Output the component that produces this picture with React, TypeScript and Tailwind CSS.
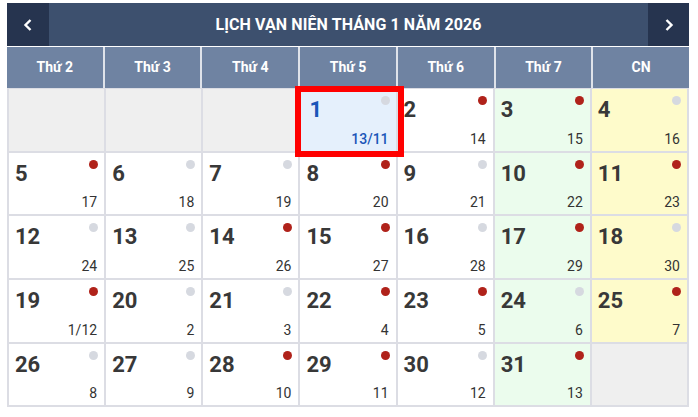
import React from 'react';

interface Ngay {
  duong: number;
  am: string;
  dot: 'red' | 'gray';
}

const THU = ['Thứ 2', 'Thứ 3', 'Thứ 4', 'Thứ 5', 'Thứ 6', 'Thứ 7', 'CN'];

const DOTS: Record<number, 'red' | 'gray'> = {
  1: 'gray', 2: 'red', 3: 'red', 4: 'gray',
  5: 'red', 6: 'gray', 7: 'gray', 8: 'red', 9: 'gray', 10: 'red', 11: 'red',
  12: 'gray', 13: 'gray', 14: 'red', 15: 'red', 16: 'gray', 17: 'red', 18: 'gray',
  19: 'red', 20: 'gray', 21: 'gray', 22: 'red', 23: 'red', 24: 'gray', 25: 'red',
  26: 'gray', 27: 'gray', 28: 'red', 29: 'red', 30: 'gray', 31: 'red',
};

const amLich = (d: number) => {
  if (d === 1) return '13/11';
  if (d <= 18) return String(d + 12);
  const x = d - 18;
  return x === 1 ? '1/12' : String(x);
};

const NGAY: (Ngay | null)[] = [
  null, null, null,
  ...Array.from({ length: 31 }, (_, i) => ({
    duong: i + 1,
    am: amLich(i + 1),
    dot: DOTS[i + 1],
  })),
  null,
];

const App: React.FC = () => {
  return (
    <div className="w-[698px] h-[417px] bg-white pt-[3px] pl-[7px] font-['Roboto',sans-serif]">
      <div className="w-[682px]">
        {/* thanh tiêu đề */}
        <div className="flex h-[43px] bg-[#3d506e] text-white">
          <button className="w-[42px] bg-[#26344f] flex items-center justify-center">
            <svg width="10" height="14" viewBox="0 0 10 14" fill="none">
              <path d="M7.5 2 L2.5 7 L7.5 12" stroke="white" strokeWidth="2.4" />
            </svg>
          </button>
          <div className="flex-1 flex items-center justify-center text-[16px] font-bold tracking-[0.1px]">
            LỊCH VẠN NIÊN THÁNG 1 NĂM 2026
          </div>
          <button className="w-[41px] bg-[#26344f] flex items-center justify-center">
            <svg width="10" height="14" viewBox="0 0 10 14" fill="none">
              <path d="M2.5 2 L7.5 7 L2.5 12" stroke="white" strokeWidth="2.4" />
            </svg>
          </button>
        </div>

        {/* tên thứ */}
        <div className="grid grid-cols-7 gap-[2px] bg-[#dfe3ea] mt-[1px]">
          {THU.map((t) => (
            <div
              key={t}
              className="h-[41px] bg-[#6f83a2] flex items-center justify-center text-white text-[14px] font-bold"
            >
              {t}
            </div>
          ))}
        </div>

        {/* lưới ngày */}
        <div className="grid grid-cols-7 gap-[2px] bg-[#dcdde4] p-[2px] pt-[1px]">
          {NGAY.map((n, i) => {
            const col = i % 7;
            if (!n) {
              return <div key={i} className="h-[61.7px] bg-[#efefef]" />;
            }
            const homNay = n.duong === 1;
            const bg = homNay
              ? 'bg-[#e5f0fc]'
              : col === 5
              ? 'bg-[#ebfced]'
              : col === 6
              ? 'bg-[#fefbcb]'
              : 'bg-white';
            return (
              <div
                key={i}
                className={`relative h-[61.7px] ${bg} flex flex-col justify-between pl-[6px] pr-[7px] pt-[8px] pb-[4px] ${
                  homNay ? 'z-10' : ''
                }`}
              >
                <span
                  className={`text-[22px] font-bold leading-[26px] ${
                    homNay ? 'text-[#1a56b8] pl-[3px]' : 'text-[#383838]'
                  }`}
                >
                  {n.duong}
                </span>
                <span
                  className={`self-end text-[14px] leading-[16px] ${
                    homNay ? 'text-[#1a56b8] font-medium' : 'text-[#333]'
                  }`}
                >
                  {n.am}
                </span>
                <span
                  className={`absolute top-[7px] right-[6px] w-[9px] h-[9px] rounded-full ${
                    n.dot === 'red' ? 'bg-[#b0221a]' : 'bg-[#d6d9e0]'
                  }`}
                />
                {homNay && (
                  <span className="absolute top-[-3px] left-[-5px] right-[-8px] bottom-[-6px] border-[6px] border-[#ff0000] pointer-events-none" />
                )}
              </div>
            );
          })}
        </div>
      </div>
    </div>
  );
};

export default App;
